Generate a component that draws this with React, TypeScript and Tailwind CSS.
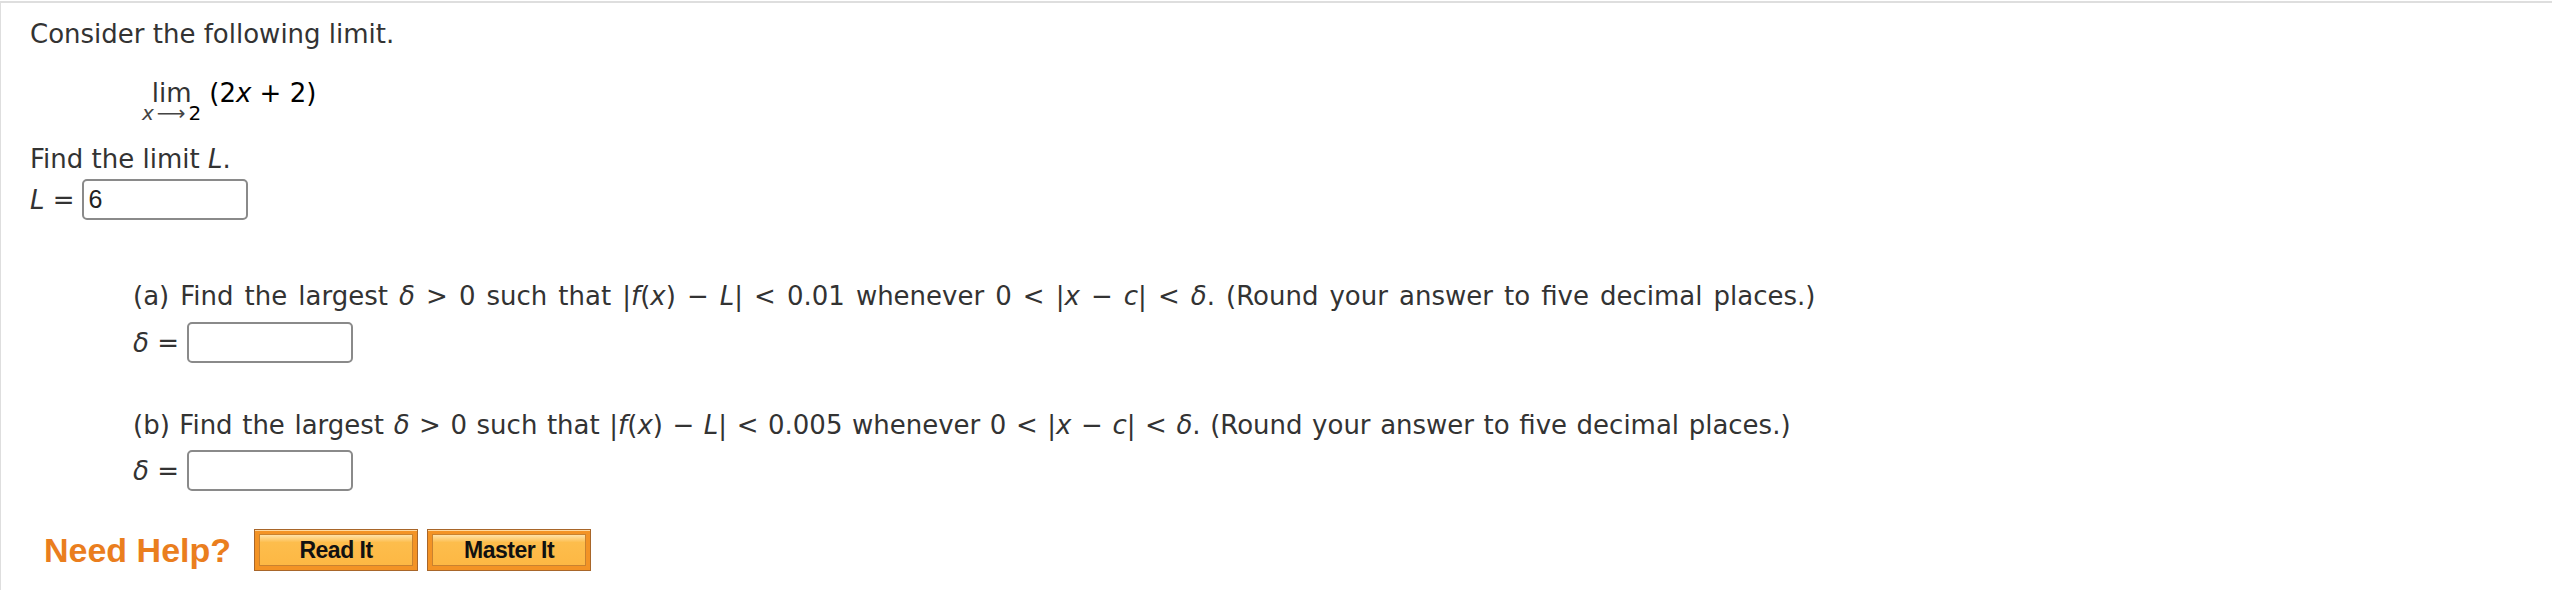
export default function App() {
  const btnOuter =
    "flex h-[42px] w-[164px] items-center justify-center border border-[#a8662a] bg-[#f39325] p-[4px] shadow-[inset_0_1px_0_#ffd9a0]";
  const btnInner =
    "flex h-full w-full items-center justify-center border border-[#c9822f] bg-[linear-gradient(to_bottom,#ffe2a8_0%,#fdbd4c_25%,#fdb844_100%)] font-['Liberation_Sans',Arial,sans-serif] text-[23px] font-bold leading-none text-[#111] tracking-[-0.5px]";
  const box =
    "h-[41px] w-[166px] rounded-[5px] border-2 border-[#8a8a8a] bg-white";
  return (
    <div className="min-h-screen bg-white">
      <div className="mt-px border-t-2 border-l border-[#dedede] pl-[29px] pt-[13px] pb-[20px] font-['DejaVu_Sans',Verdana,sans-serif] text-[26px] text-[#333]">
        <div className="leading-[36px]">Consider the following limit.</div>

        <div className="mt-[29px] ml-[112px] flex items-start">
          <div className="flex flex-col items-center">
            <span className="leading-[24px]">lim</span>
            <span className="mt-[2px] flex items-center text-[20px] leading-[12px]">
              <i className="text-[#444]">x</i>
              <span className="mx-[3px] text-[#444]">⟶</span>
              <span className="text-black">2</span>
            </span>
          </div>
          <span className="ml-[8px] leading-[24px] text-black">
            (2<i>x</i> + 2)
          </span>
        </div>

        <div className="mt-[22px] leading-[36px]">
          Find the limit <i>L</i>.
        </div>
        <div className="mt-[2px] flex items-center">
          <span className="leading-[36px]">
            <i>L</i> =
          </span>
          <div className={`ml-[7px] flex items-center pl-[5px] ${box}`}>
            <span className="font-['Liberation_Sans',Arial,sans-serif] text-[25px] leading-none text-[#222]">
              6
            </span>
          </div>
        </div>

        <div className="ml-[103px]">
          <div className="mt-[58px] leading-[36px] whitespace-nowrap [word-spacing:2.8px]">
            (a) Find the largest <i>δ</i> &gt; 0 such that |<i>f</i>(<i>x</i>) − <i>L</i>| &lt; 0.01 whenever 0 &lt; |<i>x</i> − <i>c</i>| &lt; <i>δ</i>. (Round your answer to five decimal places.)
          </div>
          <div className="mt-[8px] flex items-center">
            <span className="leading-[36px]">
              <i>δ</i> =
            </span>
            <div className={`ml-[8px] ${box} h-[40px]`} />
          </div>

          <div className="mt-[44px] leading-[36px] whitespace-nowrap [word-spacing:1.3px]">
            (b) Find the largest <i>δ</i> &gt; 0 such that |<i>f</i>(<i>x</i>) − <i>L</i>| &lt; 0.005 whenever 0 &lt; |<i>x</i> − <i>c</i>| &lt; <i>δ</i>. (Round your answer to five decimal places.)
          </div>
          <div className="mt-[7px] flex items-center">
            <span className="leading-[36px]">
              <i>δ</i> =
            </span>
            <div className={`ml-[8px] ${box} h-[40px]`} />
          </div>
        </div>

        <div className="mt-[38px] ml-[14px] flex items-center">
          <span className="font-['Liberation_Sans',Arial,sans-serif] text-[34px] font-bold leading-[30px] text-[#ea7e1e]">
            Need Help?
          </span>
          <div className="ml-[23px] flex gap-[9px]">
            <div className={btnOuter}>
              <div className={btnInner}>Read It</div>
            </div>
            <div className={btnOuter}>
              <div className={btnInner}>Master It</div>
            </div>
          </div>
        </div>
      </div>
    </div>
  );
}
